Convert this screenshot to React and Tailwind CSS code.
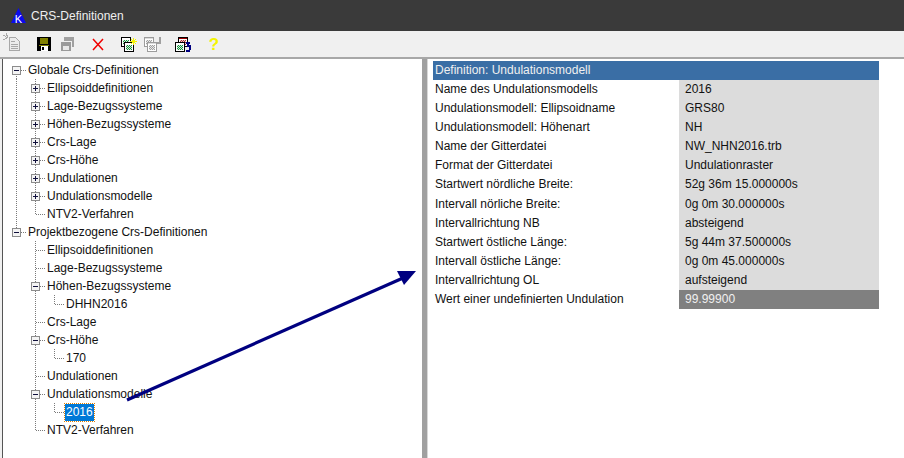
const FONT = { fontFamily: '"Liberation Sans", Arial, sans-serif' };

function Glyph({ type }) {
  const c = '#7a7a7a';
  const dash = '1 1';
  const v = (y1, y2) => <line x1="9.5" y1={y1} x2="9.5" y2={y2} stroke={c} strokeDasharray={dash} />;
  const h = <line x1="10" y1="9.5" x2="19" y2="9.5" stroke={c} strokeDasharray={dash} />;
  const box = type === 'plusT' || type === 'minusT' || type === 'minusL' || type === 'minusTop';
  return (
    <svg width="19" height="18" className="shrink-0" shapeRendering="crispEdges">
      {type === 'v' && v(0, 18)}
      {(type === 'T' || type === 'plusT' || type === 'minusT') && v(0, 18)}
      {(type === 'L' || type === 'minusL') && v(0, 10)}
      {type === 'minusTop' && v(9, 18)}
      {(type === 'T' || type === 'L' || box) && h}
      {box && (
        <g>
          <rect x="5.5" y="5.5" width="8" height="8" fill="#f4f4f4" stroke="#8c8c8c" />
          <line x1="7" y1="9.5" x2="12" y2="9.5" stroke="#10103c" />
          {type === 'plusT' && <line x1="9.5" y1="7" x2="9.5" y2="12" stroke="#10103c" />}
        </g>
      )}
    </svg>
  );
}

const tree = [
  [['minusTop'], 'Globale Crs-Definitionen'],
  [['v', 'plusT'], 'Ellipsoiddefinitionen'],
  [['v', 'plusT'], 'Lage-Bezugssysteme'],
  [['v', 'plusT'], 'Höhen-Bezugssysteme'],
  [['v', 'plusT'], 'Crs-Lage'],
  [['v', 'plusT'], 'Crs-Höhe'],
  [['v', 'plusT'], 'Undulationen'],
  [['v', 'plusT'], 'Undulationsmodelle'],
  [['v', 'L'], 'NTV2-Verfahren'],
  [['minusL'], 'Projektbezogene Crs-Definitionen'],
  [['e', 'T'], 'Ellipsoiddefinitionen'],
  [['e', 'T'], 'Lage-Bezugssysteme'],
  [['e', 'minusT'], 'Höhen-Bezugssysteme'],
  [['e', 'v', 'L'], 'DHHN2016'],
  [['e', 'T'], 'Crs-Lage'],
  [['e', 'minusT'], 'Crs-Höhe'],
  [['e', 'v', 'L'], '170'],
  [['e', 'T'], 'Undulationen'],
  [['e', 'minusT'], 'Undulationsmodelle'],
  [['e', 'v', 'L'], '2016', true],
  [['e', 'L'], 'NTV2-Verfahren'],
];

const rows = [
  ['Name des Undulationsmodells', '2016'],
  ['Undulationsmodell: Ellipsoidname', 'GRS80'],
  ['Undulationsmodell: Höhenart', 'NH'],
  ['Name der Gitterdatei', 'NW_NHN2016.trb'],
  ['Format der Gitterdatei', 'Undulationraster'],
  ['Startwert nördliche Breite:', '52g 36m 15.000000s'],
  ['Intervall nörliche Breite:', '0g 0m 30.000000s'],
  ['Intervallrichtung NB', 'absteigend'],
  ['Startwert östliche Länge:', '5g 44m 37.500000s'],
  ['Intervall östliche Länge:', '0g 0m 45.000000s'],
  ['Intervallrichtung OL', 'aufsteigend'],
];

function Cell({ x, y, border, head, a, b }) {
  const dots = [];
  for (let i = 0; i < 6; i++) {
    for (let j = 0; j < 5; j++) {
      dots.push(<rect key={`${i}-${j}`} x={x + 2 + i} y={y + 3 + j} width="1" height="1" fill={(i + j) % 2 ? a : b} />);
    }
  }
  return (
    <g>
      <rect x={x + 0.5} y={y + 0.5} width="9" height="8.5" fill="#fff" stroke={border} />
      <rect x={x + 1} y={y + 1} width="8" height="1" fill={head} />
      {dots}
    </g>
  );
}

function Toolbar() {
  const black = { border: '#000', head: '#fff', a: '#109040', b: '#d8f0d8' };
  const red = { border: '#000', head: '#a00000', a: '#b03030', b: '#e8d0d0' };
  const grey = { border: '#9c9c9c', head: '#dcdcdc', a: '#a0a0a0', b: '#e8e8e8' };
  return (
    <div className="h-[28px] bg-[#f0f0f0] border-b-2 border-[#a8a8a8] flex items-center shrink-0">
      <svg width="230" height="26" shapeRendering="crispEdges">
        {/* new (disabled) */}
        <g fill="none" stroke="#a8a8a8">
          <path d="M9.5 6.5h6l4 4v9h-10z" fill="#ececec" />
          <path d="M11 10h4M11 13h7M11 15h7M11 17h7M3 4l5 3M6 2l2 5M3 9l4-2" />
        </g>
        {/* save */}
        <rect x="37" y="6" width="14" height="14" fill="#000" />
        <rect x="40" y="7" width="8" height="6" fill="#808000" />
        <rect x="39" y="14" width="10" height="1" fill="#808000" />
        <rect x="41" y="15" width="7" height="5" fill="#fff" />
        <rect x="42" y="16" width="2" height="3" fill="#000" />
        {/* save all (disabled) */}
        <rect x="64" y="6" width="10" height="10" fill="#a0a0a0" />
        <rect x="60" y="10" width="11" height="10" fill="#9a9a9a" stroke="#f0f0f0" />
        <rect x="63" y="15" width="6" height="4" fill="#e8e8e8" />
        {/* delete */}
        <path d="M93 8l10 11M103 8l-10 11" stroke="#f00000" strokeWidth="1.5" fill="none" shapeRendering="auto" />
        {/* new grid entry */}
        <Cell x={121} y={6} {...black} />
        <Cell x={124} y={11} {...black} />
        <path d="M131 8l5 5M136 8l-5 5M133.5 7v7M130 10.5h7" stroke="#f4f400" strokeWidth="1.2" fill="none" />
        {/* copy grid entry (disabled) */}
        <Cell x={144} y={6} {...grey} />
        <Cell x={147} y={11} {...grey} />
        <path d="M157 12h3v-4M159 7h2" stroke="#a0a0a0" strokeWidth="2" fill="none" />
        {/* undo grid entry */}
        <Cell x={178} y={6} {...red} />
        <Cell x={175} y={11} {...black} />
        <path d="M186 12h4M188 12v3h2v3l-1 2h-3" stroke="#000080" strokeWidth="1.6" fill="none" />
        <text x="214" y="19" textAnchor="middle" fontSize="17" fontWeight="700" fill="#f4f400" fontFamily="Liberation Sans">?</text>
      </svg>
    </div>
  );
}

export default function App() {
  return (
    <div className="relative w-[904px] h-[458px] overflow-hidden bg-white flex flex-col text-[12px] text-[#111]" style={FONT}>
      <div className="h-[31px] bg-[#3a3a3a] flex items-center pl-[10px] shrink-0">
        <svg width="17" height="15" className="mr-[4px]">
          <path d="M8.5 0L16 15H1z" fill="#0a0aee" />
          <text x="8.5" y="14.5" textAnchor="middle" fontSize="11" fill="#fff" fontFamily="Liberation Sans">K</text>
        </svg>
        <span className="text-[#efefef] text-[12px] leading-none">CRS-Definitionen</span>
      </div>
      <Toolbar />
      <div className="flex-1 flex min-h-0 bg-[#f0f0f0]">
        <div className="ml-[2px] border-l border-[#555] bg-white pl-[4px] pt-[2px] shrink-0 w-[420px]">
          {tree.map(([glyphs, label, sel], i) => (
            <div key={i} className="h-[18px] flex items-center whitespace-nowrap">
              {glyphs.map((t, j) => <Glyph key={j} type={t} />)}
              {sel ? (
                <span className="ml-[1px] px-[1px] h-[17px] leading-[16px] bg-[#0078d7] text-white outline-1 outline-dotted outline-[#e08000]">{label}</span>
              ) : (
                <span className="ml-[2px] leading-[18px]">{label}</span>
              )}
            </div>
          ))}
        </div>
        <div className="w-[6px] bg-[#a0a0a0] shrink-0 border-r border-[#d8d8d8]" />
        <div className="flex-1 bg-white pl-[5px] pt-[2px]">
          <div className="w-[446px]">
            <div className="h-[19px] bg-[#3a6ea5] text-[#f0f0f0] pl-[2px] leading-[19px]">Definition: Undulationsmodell</div>
            {rows.map(([k, v]) => (
              <div key={k} className="h-[19.1px] flex leading-[19px]">
                <div className="w-[246px] pl-[2px]">{k}</div>
                <div className="flex-1 bg-[#dcdcdc] pl-[6px]">{v}</div>
              </div>
            ))}
            <div className="h-[19px] flex leading-[19px]">
              <div className="w-[246px] pl-[2px]">Wert einer undefinierten Undulation</div>
              <div className="flex-1 bg-[#808080] text-[#f0f0f0] pl-[6px]">99.99900</div>
            </div>
          </div>
        </div>
      </div>
      <svg className="absolute left-0 top-0 pointer-events-none" width="904" height="458">
        <line x1="127" y1="400" x2="403" y2="278" stroke="#000080" strokeWidth="3.2" />
        <path d="M416 271L397 271L404 285z" fill="#000080" />
      </svg>
    </div>
  );
}
